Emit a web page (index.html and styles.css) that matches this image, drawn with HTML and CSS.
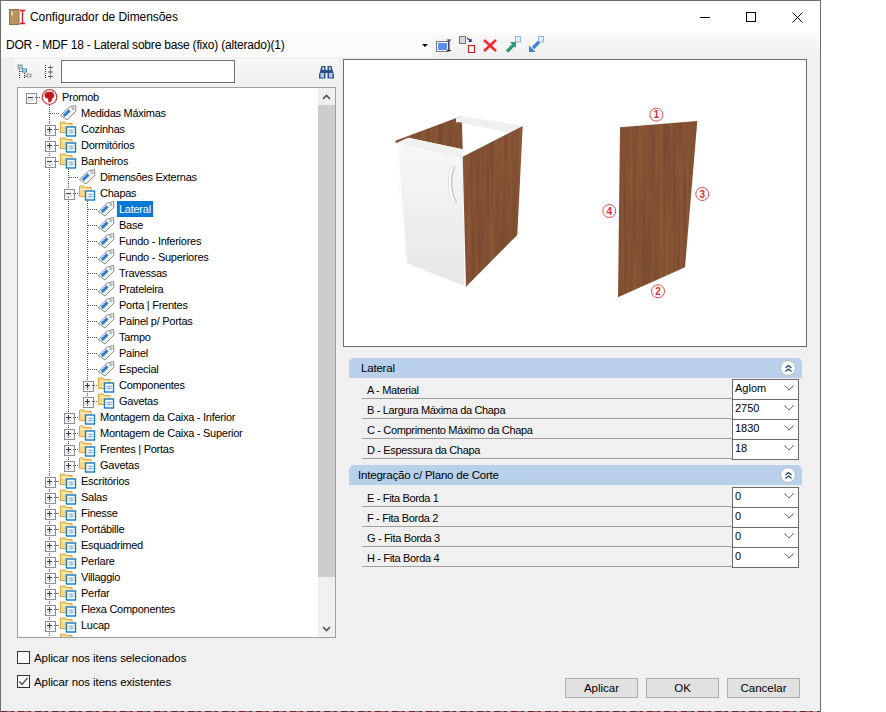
FILE: index.html
```html
<!DOCTYPE html>
<html lang="pt">
<head>
<meta charset="utf-8">
<title>Configurador de Dimensões</title>
<link rel="stylesheet" href="styles.css">
</head>
<body>
<svg class="defs" width="0" height="0" aria-hidden="true">
  <symbol id="f" viewBox="0 0 19 16">
    <path d="M1.500 11.500V1H6L7.500 2.500H13V11.500Z" fill="#fcd88a" stroke="#dba343"/>
    <path d="M2 4.500H12.500" stroke="#fff2c8"/>
    <rect x="7.500" y="6" width="9" height="9" fill="#fff" stroke="#1c7cc0" stroke-width="1.400"/>
    <path d="M9.500 9.500H15M12 8V13.500M9.500 11.500H15" stroke="#8fbce0"/>
  </symbol>
  <symbol id="t" viewBox="0 0 19 16">
    <path d="M1.500 10.500L10.500 2 16.500 .5 17 6 8 15Z" fill="#f7f7f7" stroke="#8c8c8c"/>
    <path d="M4.800 11L10.600 5.400" stroke="#2b7fd3" stroke-width="3"/>
    <circle cx="14" cy="3.600" r="1" fill="#fff" stroke="#777" stroke-width=".7"/>
  </symbol>
</svg>
<div class="window">
  <header class="title">
    <svg class="app" viewBox="0 0 18 16" width="18" height="16">
      <rect x="1.500" y=".5" width="9.500" height="15" fill="#b8925f" stroke="#93714a"/>
      <rect x="3" y="2.500" width="2" height="4" fill="#e6d5bd"/>
      <path d="M14.500 1V15M12 1.500H17M12 14.500H17" stroke="#e0102a" stroke-width="1.300" fill="none"/>
    </svg>
    <span class="title-text">Configurador de Dimensões</span>
    <div class="controls">
      <span class="ctl"><svg width="10" height="10" viewBox="0 0 10 10"><path d="M0 5.500H10" stroke="#000"/></svg></span>
      <span class="ctl"><svg width="10" height="10" viewBox="0 0 10 10"><rect x=".5" y=".5" width="9" height="9" fill="none" stroke="#000"/></svg></span>
      <span class="ctl"><svg width="11" height="11" viewBox="0 0 11 11"><path d="M.5 .5L10.500 10.500M10.500 .5L.5 10.500" stroke="#000"/></svg></span>
    </div>
  </header>

  <div class="toolbar">
    <div class="combo">
      <span>DOR - MDF 18 - Lateral sobre base (fixo) (alterado)(1)</span>
      <i class="combo-arrow"></i>
    </div>
    <div class="tools">
      <svg width="16" height="18" viewBox="0 0 16 18"><rect x=".5" y="5.500" width="12" height="10" fill="#fff" stroke="#6c7a8c"/><rect x="2" y="7" width="9" height="7" fill="#5b8ff0"/><path d="M11 4H15M13 4V14.500M11 14.500H15" stroke="#222" fill="none"/></svg>
      <svg width="16" height="18" viewBox="0 0 16 18"><rect x=".5" y=".5" width="6" height="7" fill="#d6d6d6" stroke="#777"/><rect x="9.500" y="9.500" width="6" height="7" fill="#fff" stroke="#d8101c"/><path d="M8 2L12 5M12 3V5.500H9.500" stroke="#1a2f8a" stroke-width="1.200" fill="none"/></svg>
      <svg width="16" height="18" viewBox="0 0 16 18"><path d="M2 4L14 15M14 4L2 15" stroke="#ec2b33" stroke-width="2.600"/></svg>
      <svg width="16" height="18" viewBox="0 0 16 18"><rect x="10.500" y=".5" width="5" height="5.500" fill="#e2ecf8" stroke="#92b2d8"/><path d="M2 15.500L8.500 9" stroke="#2f9a72" stroke-width="3.200"/><path d="M5 6H11V12Z" fill="#2f9a72"/></svg>
      <svg width="16" height="18" viewBox="0 0 16 18"><rect x="10.500" y=".5" width="5" height="5.500" fill="#e2ecf8" stroke="#92b2d8"/><path d="M5 12L11 6" stroke="#3c80d8" stroke-width="3.200"/><path d="M1 9.500V16H7.500Z" fill="#3c80d8"/></svg>
    </div>
  </div>

  <main class="main">
    <section class="left">
      <div class="treebar">
        <svg class="tb-a" width="16" height="18" viewBox="0 0 16 18"><path d="M2.500 6V16M7.500 10V16M2.500 8.500H5.500M7.500 13H10" stroke="#333" stroke-dasharray="1 1" fill="none"/><rect x="1" y="2" width="4" height="3" fill="#d4dae0" stroke="#7b8fa6"/><rect x="5.500" y="6" width="4" height="3" fill="#d4dae0" stroke="#3d87b8"/><rect x="10" y="11" width="4" height="3" fill="#e0e0e0" stroke="#999"/></svg>
        <svg class="tb-b" width="10" height="18" viewBox="0 0 10 18"><path d="M1.500 2V16" stroke="#333" stroke-dasharray="1 1"/><path d="M4 4.500H9M6.500 2.500V6.500M4 9H9M6.500 7V11M4 13.500H9M6.500 11.500V15.500" stroke="#666"/></svg>
        <div class="search"></div>
        <svg class="binoc" width="15" height="14" viewBox="0 0 15 14"><path d="M2.500 1H6.500V5H8.500V1H12.500L15 10V13.500H8.500V8H6.500V13.500H0V10Z" fill="#2e4f8f"/><rect x="1.500" y="8" width="3.500" height="4.500" fill="#b4cbea"/><rect x="10" y="8" width="3.500" height="4.500" fill="#b4cbea"/><rect x="3.500" y="2" width="1.500" height="3" fill="#dfe9f6"/><rect x="10" y="2" width="1.500" height="3" fill="#dfe9f6"/></svg>
      </div>
      <div class="tree">
        <div class="tree-list">
          <div class="row root"><i class="s e m"></i><svg class="ic" viewBox="0 0 19 16" width="19" height="16"><circle cx="9.500" cy="8" r="7.300" fill="#fff" stroke="#dc3a40" stroke-width="1.300"/><path d="M4.500 6C4.500 3 9 2 12.500 3.200 14.800 5 14.800 8.500 12.500 9L11 13 8.500 13.500 8 9.500C5.500 9.500 4.500 8 4.500 6Z" fill="#c4161c"/></svg><span class="lb">Promob</span></div>
          <div class="row"><i class="s"></i><i class="s c"></i><svg class="ic"><use href="#t"/></svg><span class="lb">Medidas Máximas</span></div>
          <div class="row"><i class="s"></i><i class="s e p"></i><svg class="ic"><use href="#f"/></svg><span class="lb">Cozinhas</span></div>
          <div class="row"><i class="s"></i><i class="s e p"></i><svg class="ic"><use href="#f"/></svg><span class="lb">Dormitórios</span></div>
          <div class="row"><i class="s"></i><i class="s e m"></i><svg class="ic"><use href="#f"/></svg><span class="lb">Banheiros</span></div>
          <div class="row"><i class="s"></i><i class="s v"></i><i class="s c"></i><svg class="ic"><use href="#t"/></svg><span class="lb">Dimensões Externas</span></div>
          <div class="row"><i class="s"></i><i class="s v"></i><i class="s e m"></i><svg class="ic"><use href="#f"/></svg><span class="lb">Chapas</span></div>
          <div class="row"><i class="s"></i><i class="s v"></i><i class="s v"></i><i class="s c"></i><svg class="ic"><use href="#t"/></svg><span class="lb sel">Lateral</span></div>
          <div class="row"><i class="s"></i><i class="s v"></i><i class="s v"></i><i class="s c"></i><svg class="ic"><use href="#t"/></svg><span class="lb">Base</span></div>
          <div class="row"><i class="s"></i><i class="s v"></i><i class="s v"></i><i class="s c"></i><svg class="ic"><use href="#t"/></svg><span class="lb">Fundo - Inferiores</span></div>
          <div class="row"><i class="s"></i><i class="s v"></i><i class="s v"></i><i class="s c"></i><svg class="ic"><use href="#t"/></svg><span class="lb">Fundo - Superiores</span></div>
          <div class="row"><i class="s"></i><i class="s v"></i><i class="s v"></i><i class="s c"></i><svg class="ic"><use href="#t"/></svg><span class="lb">Travessas</span></div>
          <div class="row"><i class="s"></i><i class="s v"></i><i class="s v"></i><i class="s c"></i><svg class="ic"><use href="#t"/></svg><span class="lb">Prateleira</span></div>
          <div class="row"><i class="s"></i><i class="s v"></i><i class="s v"></i><i class="s c"></i><svg class="ic"><use href="#t"/></svg><span class="lb">Porta | Frentes</span></div>
          <div class="row"><i class="s"></i><i class="s v"></i><i class="s v"></i><i class="s c"></i><svg class="ic"><use href="#t"/></svg><span class="lb">Painel p/ Portas</span></div>
          <div class="row"><i class="s"></i><i class="s v"></i><i class="s v"></i><i class="s c"></i><svg class="ic"><use href="#t"/></svg><span class="lb">Tampo</span></div>
          <div class="row"><i class="s"></i><i class="s v"></i><i class="s v"></i><i class="s c"></i><svg class="ic"><use href="#t"/></svg><span class="lb">Painel</span></div>
          <div class="row"><i class="s"></i><i class="s v"></i><i class="s v"></i><i class="s c"></i><svg class="ic"><use href="#t"/></svg><span class="lb">Especial</span></div>
          <div class="row"><i class="s"></i><i class="s v"></i><i class="s v"></i><i class="s e p"></i><svg class="ic"><use href="#f"/></svg><span class="lb">Componentes</span></div>
          <div class="row"><i class="s"></i><i class="s v"></i><i class="s v"></i><i class="s e p"></i><svg class="ic"><use href="#f"/></svg><span class="lb">Gavetas</span></div>
          <div class="row"><i class="s"></i><i class="s v"></i><i class="s e p"></i><svg class="ic"><use href="#f"/></svg><span class="lb">Montagem da Caixa - Inferior</span></div>
          <div class="row"><i class="s"></i><i class="s v"></i><i class="s e p"></i><svg class="ic"><use href="#f"/></svg><span class="lb">Montagem de Caixa - Superior</span></div>
          <div class="row"><i class="s"></i><i class="s v"></i><i class="s e p"></i><svg class="ic"><use href="#f"/></svg><span class="lb">Frentes | Portas</span></div>
          <div class="row"><i class="s"></i><i class="s v"></i><i class="s e p"></i><svg class="ic"><use href="#f"/></svg><span class="lb">Gavetas</span></div>
          <div class="row"><i class="s"></i><i class="s e p"></i><svg class="ic"><use href="#f"/></svg><span class="lb">Escritórios</span></div>
          <div class="row"><i class="s"></i><i class="s e p"></i><svg class="ic"><use href="#f"/></svg><span class="lb">Salas</span></div>
          <div class="row"><i class="s"></i><i class="s e p"></i><svg class="ic"><use href="#f"/></svg><span class="lb">Finesse</span></div>
          <div class="row"><i class="s"></i><i class="s e p"></i><svg class="ic"><use href="#f"/></svg><span class="lb">Portábille</span></div>
          <div class="row"><i class="s"></i><i class="s e p"></i><svg class="ic"><use href="#f"/></svg><span class="lb">Esquadrimed</span></div>
          <div class="row"><i class="s"></i><i class="s e p"></i><svg class="ic"><use href="#f"/></svg><span class="lb">Perlare</span></div>
          <div class="row"><i class="s"></i><i class="s e p"></i><svg class="ic"><use href="#f"/></svg><span class="lb">Villaggio</span></div>
          <div class="row"><i class="s"></i><i class="s e p"></i><svg class="ic"><use href="#f"/></svg><span class="lb">Perfar</span></div>
          <div class="row"><i class="s"></i><i class="s e p"></i><svg class="ic"><use href="#f"/></svg><span class="lb">Flexa Componentes</span></div>
          <div class="row"><i class="s"></i><i class="s e p"></i><svg class="ic"><use href="#f"/></svg><span class="lb">Lucap</span></div>
          <div class="row"><i class="s"></i><i class="s v"></i><svg class="ic"><use href="#f"/></svg></div>
        </div>
        <div class="scrollbar">
          <span class="sb-btn"><svg width="9" height="6" viewBox="0 0 9 6"><path d="M1 5L4.500 1.500 8 5" fill="none" stroke="#505050" stroke-width="1.600"/></svg></span>
          <span class="sb-thumb"></span>
          <span class="sb-track"></span>
          <span class="sb-btn"><svg width="9" height="6" viewBox="0 0 9 6"><path d="M1 1L4.500 4.500 8 1" fill="none" stroke="#505050" stroke-width="1.600"/></svg></span>
        </div>
      </div>
      <div class="checks">
        <label class="check"><span class="box"></span>Aplicar nos itens selecionados</label>
        <label class="check"><span class="box"><svg width="11" height="11" viewBox="0 0 11 11"><path d="M1.500 5.500L4 8.500 9.500 2" fill="none" stroke="#444" stroke-width="1.200"/></svg></span>Aplicar nos itens existentes</label>
      </div>
    </section>

    <section class="right">
      <div class="preview">
        <svg class="scene" viewBox="344 60 462 286" width="462" height="286">
          <defs>
            <filter id="wood" x="0" y="0" width="100%" height="100%" color-interpolation-filters="sRGB">
              <feTurbulence type="fractalNoise" baseFrequency="0.3 0.01" numOctaves="2" seed="4"/>
              <feColorMatrix type="matrix" values="0.14 0 0 0 0.44  0.1 0 0 0 0.265  0.07 0 0 0 0.165  0 0 0 0 1"/>
              <feComposite in2="SourceAlpha" operator="in"/>
            </filter>
            <linearGradient id="door" x1="0" y1="0" x2="0" y2="1">
              <stop offset="0" stop-color="#f8f8f8"/>
              <stop offset="1" stop-color="#e6e6e6"/>
            </linearGradient>
          </defs>
          <polygon points="395.300,140.700 461.700,116 462.700,149.300 408.300,137.700 396,143.300" fill="#000" filter="url(#wood)"/>
          <polygon points="456,118.300 461.700,116 521.700,126 508.300,132.700 460,122.300 456,122.300" fill="#f0f0f0"/>
          <polygon points="396,143.300 408.300,137.700 462.700,149.300 462.700,158.300" fill="#f0f0f0"/>
          <polygon points="395.300,143 463,158.500 464.500,286 405.300,262.700" fill="url(#door)"/>
          <polygon points="396,144 398,144 407,263 405.300,262.700" fill="#fff"/>
          <path d="M453.500 166C449 176 449 194 455.500 203" fill="none" stroke="#bdbdbd" stroke-width="4"/>
          <path d="M453 166C448.500 176 448.500 194 455 203" fill="none" stroke="#fff" stroke-width="2.500"/>
          <polygon points="462.700,156.700 522.700,126 517.300,235 466,286.700" fill="#000" filter="url(#wood)"/>
          <polygon points="620,127.300 697.300,121 685,267.300 618,297.300" fill="#000" filter="url(#wood)"/>
          <g class="mark">
            <circle cx="656.300" cy="114.700" r="6.500"/><text x="656.300" y="118.300">1</text>
            <circle cx="658" cy="291.300" r="6.500"/><text x="658" y="294.900">2</text>
            <circle cx="702.300" cy="194" r="6.500"/><text x="702.300" y="197.600">3</text>
            <circle cx="609.300" cy="211" r="6.500"/><text x="609.300" y="214.600">4</text>
          </g>
        </svg>
      </div>

      <div class="group first">
        <div class="group-head lateral"><span>Lateral</span><i class="collapse"><svg width="9" height="9" viewBox="0 0 9 9"><path d="M1.500 4L4.500 1.500 7.500 4M1.500 7.500L4.500 5 7.500 7.500" fill="none" stroke="#1f3a78" stroke-width="1.100"/></svg></i></div>
        <div class="prop"><span class="name">A - Material</span><div class="sel-box"><span>Aglom</span><svg width="10" height="6" viewBox="0 0 10 6"><path d="M.5 .5L5 5 9.500 .5" fill="none" stroke="#666"/></svg></div></div>
        <div class="prop"><span class="name">B - Largura Máxima da Chapa</span><div class="sel-box"><span>2750</span><svg width="10" height="6" viewBox="0 0 10 6"><path d="M.5 .5L5 5 9.500 .5" fill="none" stroke="#666"/></svg></div></div>
        <div class="prop"><span class="name">C - Comprimento Máximo da Chapa</span><div class="sel-box"><span>1830</span><svg width="10" height="6" viewBox="0 0 10 6"><path d="M.5 .5L5 5 9.500 .5" fill="none" stroke="#666"/></svg></div></div>
        <div class="prop"><span class="name">D - Espessura da Chapa</span><div class="sel-box"><span>18</span><svg width="10" height="6" viewBox="0 0 10 6"><path d="M.5 .5L5 5 9.500 .5" fill="none" stroke="#666"/></svg></div></div>
      </div>
      <div class="group second">
        <div class="group-head"><span>Integração c/ Plano de Corte</span><i class="collapse"><svg width="9" height="9" viewBox="0 0 9 9"><path d="M1.500 4L4.500 1.500 7.500 4M1.500 7.500L4.500 5 7.500 7.500" fill="none" stroke="#1f3a78" stroke-width="1.100"/></svg></i></div>
        <div class="prop"><span class="name">E - Fita Borda 1</span><div class="sel-box"><span>0</span><svg width="10" height="6" viewBox="0 0 10 6"><path d="M.5 .5L5 5 9.500 .5" fill="none" stroke="#666"/></svg></div></div>
        <div class="prop"><span class="name">F - Fita Borda 2</span><div class="sel-box"><span>0</span><svg width="10" height="6" viewBox="0 0 10 6"><path d="M.5 .5L5 5 9.500 .5" fill="none" stroke="#666"/></svg></div></div>
        <div class="prop"><span class="name">G - Fita Borda 3</span><div class="sel-box"><span>0</span><svg width="10" height="6" viewBox="0 0 10 6"><path d="M.5 .5L5 5 9.500 .5" fill="none" stroke="#666"/></svg></div></div>
        <div class="prop"><span class="name">H - Fita Borda 4</span><div class="sel-box"><span>0</span><svg width="10" height="6" viewBox="0 0 10 6"><path d="M.5 .5L5 5 9.500 .5" fill="none" stroke="#666"/></svg></div></div>
      </div>

      <div class="buttons">
        <button class="btn" type="button">Aplicar</button>
        <button class="btn" type="button">OK</button>
        <button class="btn" type="button">Cancelar</button>
      </div>
    </section>
  </main>
  <div class="noise"></div>
</div>
</body>
</html>
```

FILE: styles.css
```css
* { box-sizing: border-box; }
html, body { margin: 0; padding: 0; background: #fff; }
body {
  width: 886px;
  height: 712px;
  overflow: hidden;
  font-family: "Liberation Sans", Arial, sans-serif;
  font-size: 11px;
  color: #000;
}
.defs { position: absolute; }
.window {
  width: 821px;
  height: 712px;
  display: flex;
  flex-direction: column;
  background: #f0f0f0;
  border: 1px solid #6d6d6d;
  border-bottom: 0;
}
.title {
  height: 32px;
  display: flex;
  align-items: center;
  padding-left: 7px;
  background: #fff;
  flex: none;
}
.app { margin-right: 4px; }
.title-text { font-size: 12px; letter-spacing: -.06px; }
.controls { margin-left: auto; display: flex; }
.ctl { width: 46px; height: 30px; display: flex; align-items: center; justify-content: center; }
.toolbar {
  height: 24px;
  flex: none;
  display: flex;
  align-items: center;
  background: linear-gradient(#fafafa, #f0f0f0);
}
.combo {
  width: 431px;
  height: 24px;
  display: flex;
  align-items: center;
  justify-content: space-between;
  padding: 0 4px 0 5px;
  background: #fbfbfb;
  font-size: 12px;
  letter-spacing: -.2px;
}
.combo-arrow {
  width: 0;
  height: 0;
  border-left: 3px solid transparent;
  border-right: 3px solid transparent;
  border-top: 3px solid #000;
}
.tools { display: flex; gap: 7px; margin-left: 4px; }
.main {
  flex: none;
  height: 641px;
  padding: 2px 0 0 16px;
  display: flex;
  gap: 7px;
}
.left { width: 319px; display: flex; flex-direction: column; }
.treebar {
  height: 25px;
  margin: 0 -3px 3px;
  padding: 0 5px 0 3px;
  display: flex;
  align-items: center;
  background: linear-gradient(#f8f8f8, #f0f0f0);
}
.tb-a { margin-right: 11px; }
.tb-b { margin-right: 7px; }
.search { width: 174px; height: 23px; background: #fff; border: 1px solid #707070; }
.binoc { margin-left: auto; }
.tree {
  height: 551px;
  display: flex;
  background: #fff;
  border: 1px solid #a0a0a0;
  overflow: hidden;
  flex: none;
}
.tree-list { flex: 1; min-width: 0; padding: 1px 0 0 3px; overflow: hidden; }
.row { height: 16px; display: flex; align-items: center; white-space: nowrap; }
.s { width: 19px; height: 16px; flex: none; position: relative; display: block; }
.ic { width: 19px; height: 16px; flex: none; }
.lb { margin-left: 1px; padding: 0 2px; height: 16px; line-height: 16px; font-size: 11px; letter-spacing: -.26px; }
.sel { background: #0078d7; color: #fff; }

/* tree guides: dotted lines under, expander box on top */
.v::before, .c::before, .e::before {
  content: "";
  position: absolute;
  inset: 0;
  background-repeat: no-repeat;
  background-image:
    repeating-linear-gradient(#555 0 1px, transparent 1px 2px),
    repeating-linear-gradient(90deg, #555 0 1px, transparent 1px 2px);
  background-size: 1px 16px, 9px 1px;
  background-position: 9px 0, 10px 8px;
}
.v::before { background-size: 1px 16px, 0 0; }
.root .e::before { background-size: 0 0, 9px 1px; }
.e::after {
  content: "";
  position: absolute;
  left: 5px;
  top: 4px;
  width: 9px;
  height: 9px;
  border: 1px solid #8e8e8e;
  background-repeat: no-repeat;
  background-image:
    linear-gradient(#2f3c66, #2f3c66),
    linear-gradient(#fff, #dcdcdc);
  background-size: 5px 1px, 7px 7px;
  background-position: 1px 3px, 0 0;
}
.e.p::after {
  background-image:
    linear-gradient(#2f3c66, #2f3c66),
    linear-gradient(#2f3c66, #2f3c66),
    linear-gradient(#fff, #dcdcdc);
  background-size: 5px 1px, 1px 5px, 7px 7px;
  background-position: 1px 3px, 3px 1px, 0 0;
}

.scrollbar {
  width: 17px;
  flex: none;
  display: flex;
  flex-direction: column;
  background: #f0f0f0;
}
.sb-btn { height: 17px; flex: none; display: flex; align-items: center; justify-content: center; }
.sb-thumb { height: 472px; flex: none; background: #cdcdcd; }
.sb-track { flex: 1; }
.checks { margin-top: 13px; display: flex; flex-direction: column; gap: 11px; }
.check { display: flex; align-items: center; height: 13px; gap: 4px; font-size: 11.500px; letter-spacing: -.08px; }
.box {
  width: 13px;
  height: 13px;
  border: 1px solid #333;
  background: #fff;
  display: flex;
  align-items: center;
  justify-content: center;
}
.right { width: 464px; display: flex; flex-direction: column; }
.preview { height: 288px; flex: none; background: #fff; border: 1px solid #6d6d6d; }
.scene { display: block; }
.mark circle { fill: none; stroke: #e8484c; stroke-width: 1; }
.mark text { fill: #e02a30; font-size: 10px; font-weight: bold; text-anchor: middle; font-family: "Liberation Sans", Arial, sans-serif; }
.group { width: 453px; margin-left: 6px; flex: none; }
.first { margin-top: 11px; }
.second { margin-top: 6px; }
.group-head {
  height: 20px;
  margin-bottom: 1px;
  display: flex;
  align-items: center;
  justify-content: space-between;
  padding: 0 6px 0 9px;
  background: #b9d0ea;
  border-radius: 5px 5px 0 0;
  font-size: 11.500px;
  letter-spacing: -.2px;
}
.second .group-head { margin-bottom: 2px; }
.lateral { padding-left: 12px; }
.collapse {
  width: 16px;
  height: 16px;
  border-radius: 50%;
  background: #fff;
  box-shadow: 0 0 0 1px #a8b4c4 inset;
  display: flex;
  align-items: center;
  justify-content: center;
}
.prop {
  height: 20px;
  margin-left: 13px;
  width: 437px;
  padding-left: 5px;
  display: flex;
  align-items: center;
  justify-content: space-between;
  border-bottom: 1px solid #a0a0a0;
  font-size: 11px;
}
.name { padding-top: 2px; letter-spacing: -.34px; }
.sel-box {
  width: 67px;
  height: 21px;
  margin-bottom: -1px;
  padding: 0 4px 2px 2px;
  display: flex;
  align-items: center;
  justify-content: space-between;
  background: #fff;
  border: 1px solid #6d6d6d;
  font-size: 11px;
}
.buttons { margin-top: auto; padding-right: 7px; display: flex; justify-content: flex-end; gap: 8px; }
.btn {
  width: 73px;
  height: 20px;
  padding: 0;
  background: #e1e1e1;
  border: 1px solid #adadad;
  font-family: "Liberation Sans", Arial, sans-serif;
  font-size: 11.500px;
  color: #000;
}
.noise {
  margin-top: auto;
  height: 1px;
  flex: none;
  background: repeating-linear-gradient(90deg, #7a2020 0 6px, #777 6px 10px, #7a2020 10px 13px, #aaa 13px 17px);
}
```
